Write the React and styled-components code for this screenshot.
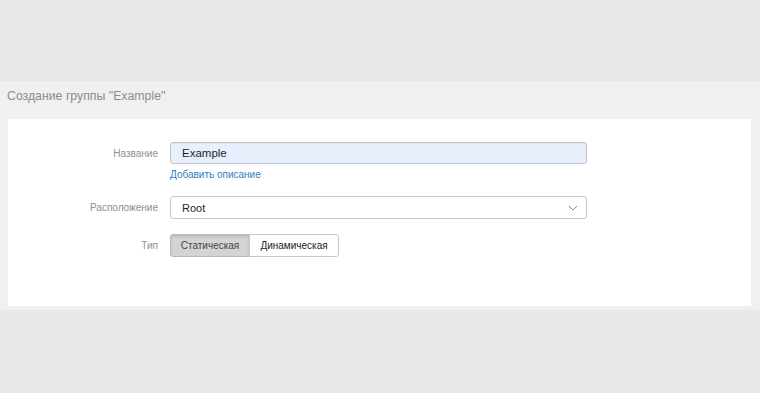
import React from "react";
import styled, { createGlobalStyle } from "styled-components";

const Global = createGlobalStyle`
  html, body { margin: 0; padding: 0; background: #e9e8e8; }
  body { font-family: "Liberation Sans", Arial, sans-serif; }
  * { box-sizing: border-box; }
`;

const Page = styled.div`
  width: 760px;
  height: 393px;
  display: flex;
  flex-direction: column;
  background: #e9e8e8;
`;

const TopBand = styled.div`
  height: 81px;
  flex: none;
`;

const Panel = styled.section`
  background: #f0f0f0;
  padding: 6px 9px 4px 8px;
  display: flex;
  flex-direction: column;
`;

const Title = styled.h1`
  margin: 0 0 0 -1px;
  font-size: 12.3px;
  font-weight: normal;
  color: #8c8c8c;
  line-height: 18px;
  height: 32px;
`;

const Card = styled.div`
  background: #fff;
  height: 187px;
  padding: 23px 0 0 0;
  display: flex;
  flex-direction: column;
`;

const Row = styled.div`
  display: grid;
  grid-template-columns: 150px 417px;
  column-gap: 12px;
  align-items: start;
  margin-bottom: ${(p) => p.$gap || 0}px;
`;

const Label = styled.label`
  text-align: right;
  font-size: 10px;
  color: #8e8e8e;
  line-height: 23px;
`;

const Field = styled.div`
  display: flex;
  flex-direction: column;
  align-items: flex-start;
`;

const Input = styled.div`
  width: 417px;
  height: ${(p) => (p.$filled ? 22 : 23)}px;
  border: 1px solid ${(p) => (p.$filled ? "#bcc3cc" : "#c8c8c8")};
  border-radius: 3px;
  background: ${(p) => (p.$filled ? "#e8f0fe" : "#fff")};
  font-size: ${(p) => (p.$filled ? 11.5 : 11)}px;
  color: #1e1e1e;
  display: flex;
  align-items: center;
  justify-content: space-between;
  padding: 0 8px 0 11px;
  box-shadow: ${(p) => (p.$filled ? "inset 0 1px 1px rgba(0,0,0,0.06)" : "none")};
`;

const Link = styled.a`
  font-size: 10px;
  color: #2f80c0;
  line-height: 13px;
  margin-top: 4px;
  text-decoration: none;
`;

const Group = styled.div`
  display: flex;
`;

const SegBtn = styled.button`
  height: 23px;
  width: ${(p) => p.$w}px;
  font-family: inherit;
  font-size: 10px;
  color: ${(p) => (p.$active ? "#444" : "#222")};
  background: ${(p) => (p.$active ? "#d4d4d4" : "#fff")};
  border: 1px solid ${(p) => (p.$active ? "#b8b8b8" : "#c8c8c8")};
  box-shadow: ${(p) => (p.$active ? "inset 0 2px 3px rgba(0,0,0,0.12)" : "none")};
  padding: 0;
  margin-left: ${(p) => (p.$first ? 0 : -1)}px;
  border-radius: ${(p) => (p.$first ? "3px 0 0 3px" : "0 3px 3px 0")};
`;

export default function App() {
  return (
    <>
      <Global />
      <Page>
        <TopBand />
        <Panel>
          <Title>Создание группы "Example"</Title>
          <Card>
            <Row $gap={15}>
              <Label>Название</Label>
              <Field>
                <Input $filled>Example</Input>
                <Link href="#">Добавить описание</Link>
              </Field>
            </Row>
            <Row $gap={15}>
              <Label>Расположение</Label>
              <Field>
                <Input>
                  <span>Root</span>
                  <svg width="10" height="6" viewBox="0 0 10 6">
                    <path d="M1 1 L5 5 L9 1" fill="none" stroke="#888" strokeWidth="1" />
                  </svg>
                </Input>
              </Field>
            </Row>
            <Row>
              <Label>Тип</Label>
              <Group>
                <SegBtn $active $first $w={80}>Статическая</SegBtn>
                <SegBtn $w={90}>Динамическая</SegBtn>
              </Group>
            </Row>
          </Card>
        </Panel>
      </Page>
    </>
  );
}
